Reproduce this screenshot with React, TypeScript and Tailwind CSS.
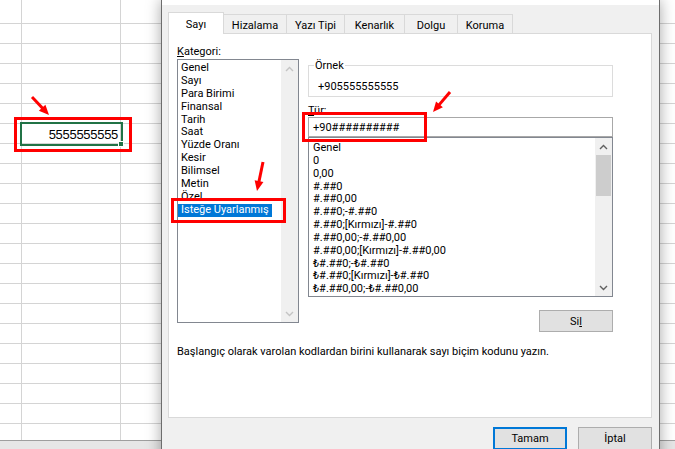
import React from 'react';

const categories = [
  'Genel',
  'Sayı',
  'Para Birimi',
  'Finansal',
  'Tarih',
  'Saat',
  'Yüzde Oranı',
  'Kesir',
  'Bilimsel',
  'Metin',
  'Özel',
  'İsteğe Uyarlanmış',
];

const formats = [
  'Genel',
  '0',
  '0,00',
  '#.##0',
  '#.##0,00',
  '#.##0;-#.##0',
  '#.##0;[Kırmızı]-#.##0',
  '#.##0,00;-#.##0,00',
  '#.##0,00;[Kırmızı]-#.##0,00',
  '₺#.##0;-₺#.##0',
  '₺#.##0;[Kırmızı]-₺#.##0',
  '₺#.##0,00;-₺#.##0,00',
];

const tabs = [
  { label: 'Hizalama', w: 'w-[63px]' },
  { label: 'Yazı Tipi', w: 'w-[58px]' },
  { label: 'Kenarlık', w: 'w-[60px]' },
  { label: 'Dolgu', w: 'w-[53px]' },
  { label: 'Koruma', w: 'w-[55px]' },
];

const rows = Array.from({ length: 21 }, (_, i) => i);

function Chevron({ up, color }: { up?: boolean; color: string }) {
  return (
    <svg width="9" height="6" viewBox="0 0 9 6">
      <polyline
        points={up ? '1,5 4.5,1.5 8,5' : '1,1 4.5,4.5 8,1'}
        fill="none"
        stroke={color}
        strokeWidth="1.4"
      />
    </svg>
  );
}

function ScrollBar({ disabled, children }: { disabled?: boolean; children?: React.ReactNode }) {
  const c = disabled ? '#c4c4c4' : '#606060';
  return (
    <div className="flex w-[17px] shrink-0 flex-col bg-[#f0f0f0]">
      <div className="flex h-[17px] items-center justify-center">
        <Chevron up color={c} />
      </div>
      <div className="flex-1">{children}</div>
      <div className="flex h-[17px] items-center justify-center">
        <Chevron color={c} />
      </div>
    </div>
  );
}

// red annotation arrow: line + filled head
function Arrow({ x1, y1, x2, y2 }: { x1: number; y1: number; x2: number; y2: number }) {
  const dx = x2 - x1;
  const dy = y2 - y1;
  const len = Math.hypot(dx, dy);
  const ux = dx / len;
  const uy = dy / len;
  const hl = 10;
  const hw = 4.5;
  const bx = x2 - ux * hl;
  const by = y2 - uy * hl;
  return (
    <g>
      <line x1={x1} y1={y1} x2={bx + ux} y2={by + uy} stroke="#ff0000" strokeWidth="3" />
      <polygon
        points={`${x2},${y2} ${bx - uy * hw},${by + ux * hw} ${bx + uy * hw},${by - ux * hw}`}
        fill="#ff0000"
      />
    </g>
  );
}

export default function App() {
  return (
    <div className="relative h-[449px] w-[675px] overflow-hidden bg-white font-['Roboto',sans-serif] text-[11px] leading-[13px] text-black">
      {/* spreadsheet grid behind the dialog */}
      <div className="flex flex-col">
        {rows.map((i) => (
          <div
            key={i}
            className={`flex border-b border-[#d4d4d4] ${i === 0 ? 'h-[24px]' : 'h-[20px]'}`}
          >
            <div className="w-[22px] border-r border-[#d4d4d4]" />
            <div className="w-[99px] border-r border-[#d4d4d4]" />
            <div className="flex-1" />
          </div>
        ))}
        <div className="flex h-[16px]">
          <div className="w-[22px] border-r border-[#d4d4d4]" />
          <div className="w-[99px] border-r border-[#d4d4d4]" />
          <div className="flex-1" />
        </div>
        <div className="h-[9px] border-t border-[#9e9e9e] bg-[#e6e6e6]" />
      </div>

      {/* selected cell */}
      <div className="absolute left-[20px] top-[122px] flex h-[24px] w-[103px] items-center justify-end border-2 border-[#217346] pr-[3px] font-['Liberation_Sans',sans-serif] text-[13px] tracking-[-0.3px]">
        5555555555
        <div className="absolute bottom-[-3px] right-[-3px] h-[6px] w-[6px] border border-white bg-[#217346]" />
      </div>

      {/* Hücreleri Biçimlendir dialog */}
      <div className="absolute left-[161px] top-0 flex h-[470px] w-[499px] flex-col border-x border-[#6d6d6d] bg-[#f0f0f0] shadow-[0_0_14px_rgba(0,0,0,0.35)]">
        <div className="h-[5px] bg-white" />

        <div className="ml-[6px] mt-[7px] flex h-[21px] items-end">
          <div className="relative z-10 -mb-px flex h-[22px] w-[56px] items-center justify-center border-x border-t border-[#d9d9d9] bg-white pt-[1px]">
            Sayı
          </div>
          {tabs.map((t) => (
            <div
              key={t.label}
              className={`flex h-[19px] items-center justify-center border-r border-t border-[#d9d9d9] bg-[#f0f0f0] pt-[2px] ${t.w}`}
            >
              {t.label}
            </div>
          ))}
        </div>

        <div className="ml-[6px] h-[385px] w-[484px] border border-[#d9d9d9] bg-white pl-[8px] pt-[10px]">
          <div className="flex">
            <div className="flex w-[122px] flex-col">
              <div className="h-[13px] pt-[1px]">
                <span className="underline">K</span>ategori:
              </div>
              <div className="mt-[2px] flex h-[264px] border border-[#828790]">
                <div className="flex flex-1 flex-col items-start pt-[2px]">
                  {categories.map((c, i) => (
                    <div
                      key={c}
                      className={`h-[12.9px] whitespace-nowrap px-[3px] leading-[12.9px] ${
                        i === categories.length - 1 ? 'bg-[#0078d7] text-white' : ''
                      }`}
                    >
                      {c}
                    </div>
                  ))}
                </div>
                <ScrollBar disabled />
              </div>
            </div>

            <div className="ml-[9px] flex w-[305px] flex-col">
              <fieldset className="mt-[15px] border border-[#dcdcdc] pb-[3px] pl-[5px]">
                <legend className="px-[1px]">Örnek</legend>
                <div className="pl-[4px] pt-[8px]">+905555555555</div>
              </fieldset>

              <div className="mt-[6px] h-[13px] pt-[1px]">
                <span className="underline">T</span>ür:
              </div>
              <div className="mt-[1px] flex h-[20px] items-center border border-[#a8a8a8] pl-[4px]">
                +90##########
              </div>
              <div className="flex h-[160px] border border-[#828790]">
                <div className="flex flex-1 flex-col pl-[4px] pt-[4px]">
                  {formats.map((f) => (
                    <div key={f} className="h-[12.85px] whitespace-nowrap leading-[12.85px]">
                      {f}
                    </div>
                  ))}
                </div>
                <ScrollBar>
                  <div className="mx-[1px] h-[41px] bg-[#cdcdcd]" />
                </ScrollBar>
              </div>

              <button className="mt-[13px] flex h-[22px] w-[74px] items-center justify-center self-end border border-[#adadad] bg-[#e1e1e1]">
                Si<span className="underline">l</span>
              </button>
            </div>
          </div>

          <p className="mt-[13px]">
            Başlangıç olarak varolan kodlardan birini kullanarak sayı biçim kodunu yazın.
          </p>
        </div>

        <div className="mt-[9px] flex justify-end gap-[11px] pr-[7px]">
          <button className="flex h-[23px] w-[74px] items-center justify-center border-2 border-[#0078d7] bg-[#e1e1e1]">
            Tamam
          </button>
          <button className="flex h-[23px] w-[74px] items-center justify-center border border-[#adadad] bg-[#e1e1e1]">
            İptal
          </button>
        </div>
      </div>

      {/* red annotations */}
      <div className="absolute left-[14px] top-[117px] h-[35px] w-[118px] border-[3px] border-[#ff0000]" />
      <div className="absolute left-[171px] top-[198px] h-[25px] w-[115px] border-[3px] border-[#ff0000]" />
      <div className="absolute left-[302px] top-[112px] h-[30px] w-[125px] border-[3px] border-[#ff0000]" />
      <svg className="pointer-events-none absolute inset-0" width="675" height="449">
        <Arrow x1={32} y1={97} x2={49} y2={115} />
        <Arrow x1={263} y1={162} x2={257} y2={191} />
        <Arrow x1={450} y1={92} x2={433} y2={112} />
      </svg>
    </div>
  );
}
